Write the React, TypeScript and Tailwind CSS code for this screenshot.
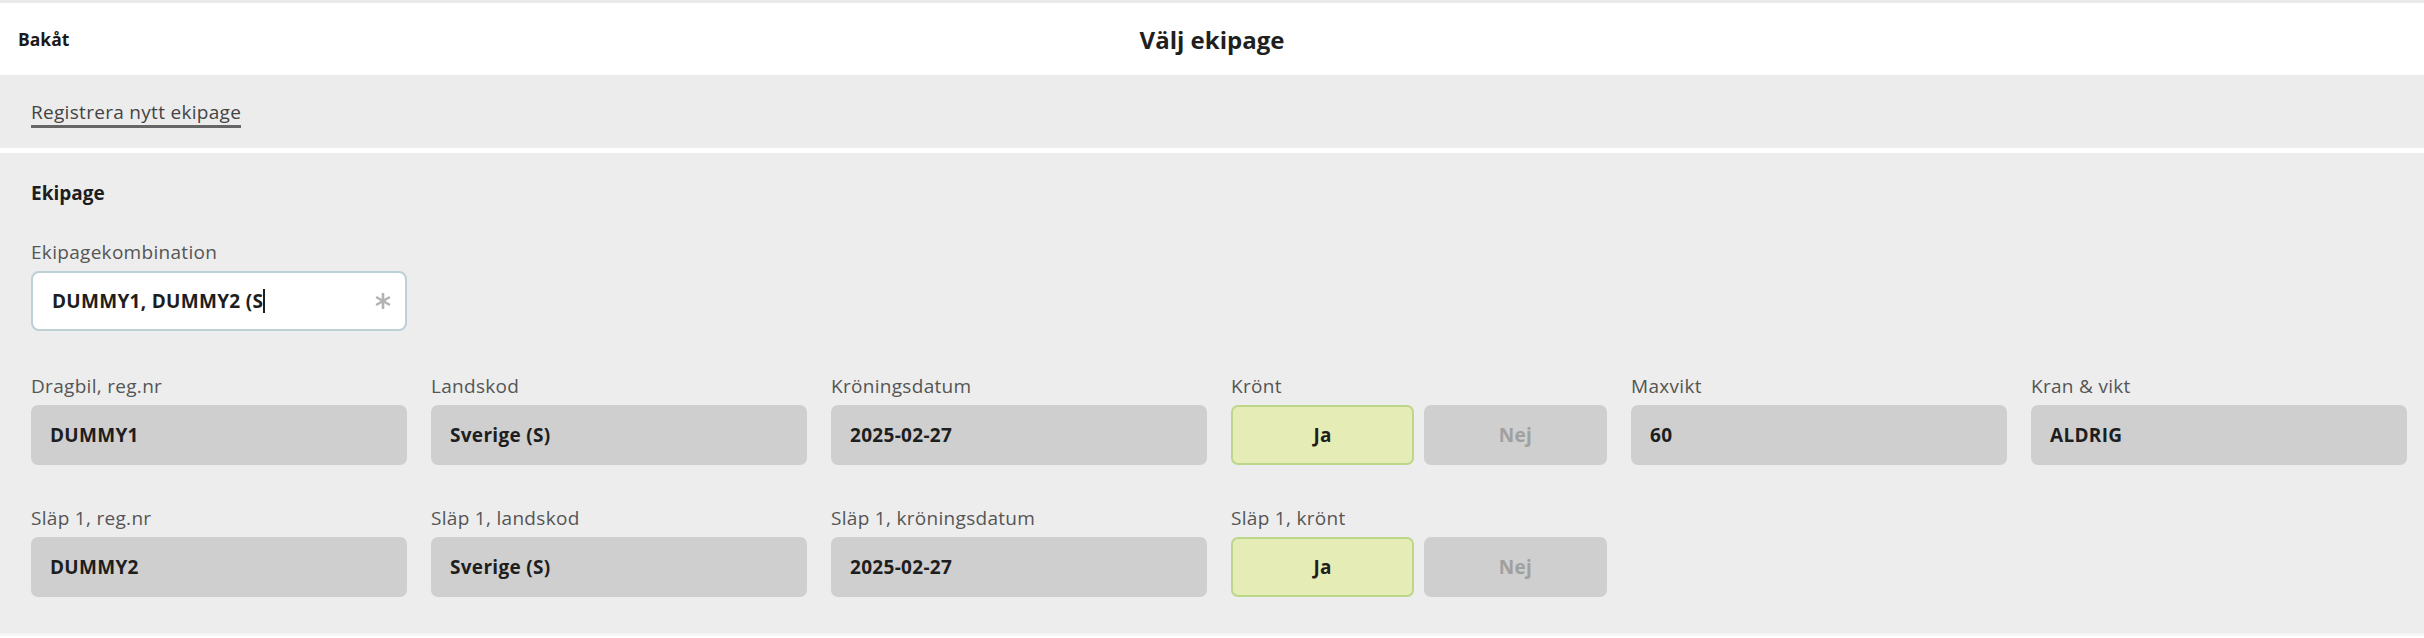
import { ReactNode } from "react";

const font = { fontFamily: '"Open Sans", "Liberation Sans", sans-serif' };

function Label({ children }: { children: ReactNode }) {
  return (
    <div className="text-[19px] tracking-[0.3px] leading-[24px] text-[#555] mb-[7px] whitespace-nowrap">
      {children}
    </div>
  );
}

function ReadOnlyField({ label, value }: { label: string; value: string }) {
  return (
    <div>
      <Label>{label}</Label>
      <div className="h-[60px] rounded-[7px] bg-[#cfcfcf] flex items-center pl-[19px] text-[19px] tracking-[0.3px] font-bold text-[#1e1e1e]">
        {value}
      </div>
    </div>
  );
}

function YesNoField({ label }: { label: string }) {
  return (
    <div>
      <Label>{label}</Label>
      <div className="grid grid-cols-2 gap-[10px]">
        <div className="h-[60px] rounded-[7px] bg-[#e6ecb6] border-2 border-[#bcd68a] flex items-center justify-center text-[19px] font-bold text-[#1e1e1e]">
          Ja
        </div>
        <div className="h-[60px] rounded-[7px] bg-[#cfcfcf] flex items-center justify-center text-[19px] tracking-[0.3px] font-bold text-[#a0a0a0]">
          Nej
        </div>
      </div>
    </div>
  );
}

function Asterisk() {
  return (
    <svg width="18" height="18" viewBox="0 0 18 18" className="text-[#b3b3b3]">
      <g stroke="currentColor" strokeWidth="2.6" strokeLinecap="butt">
        <line x1="9" y1="1" x2="9" y2="17" />
        <line x1="2.1" y1="5" x2="15.9" y2="13" />
        <line x1="2.1" y1="13" x2="15.9" y2="5" />
      </g>
    </svg>
  );
}

export default function App() {
  return (
    <div className="w-[2424px] h-[638px] bg-white overflow-hidden" style={font}>
      <div className="h-[3px] bg-[#e9e9e9]" />
      <header className="h-[72px] grid grid-cols-[1fr_auto_1fr] items-center">
        <div className="pl-[18px] text-[17.5px] font-bold text-[#1a1a1a]">Bakåt</div>
        <h1 className="text-[24px] font-bold text-[#1f1f1f] mt-[2px]">Välj ekipage</h1>
        <div />
      </header>
      <div className="h-[73px] bg-[#ececec] flex items-center px-[31px]">
        <a className="text-[19px] tracking-[0.3px] text-[#444] leading-[24px] border-b-[3px] border-[#666] pb-[1px] mt-[4px] cursor-pointer">
          Registrera nytt ekipage
        </a>
      </div>
      <div className="h-[5px] bg-white" />
      <section className="bg-[#ededed] pl-[31px] pr-[17px] pt-[28px] pb-[36px]">
        <div className="text-[19px] leading-[24px] font-bold text-[#1e1e1e]">Ekipage</div>
        <div className="mt-[35px] w-[376px]">
          <Label>Ekipagekombination</Label>
          <div className="h-[60px] rounded-[8px] bg-white border-2 border-[#bcd0d5] flex items-center pl-[19px] pr-[13px]">
            <span className="text-[19px] tracking-[0.3px] font-bold text-[#1e1e1e]">DUMMY1, DUMMY2 (S</span>
            <span className="w-[1.5px] h-[24px] bg-[#1e1e1e]" />
            <div className="flex-1" />
            <Asterisk />
          </div>
        </div>
        <div className="mt-[43px] grid grid-cols-6 gap-x-[24px] gap-y-[41px]">
          <ReadOnlyField label="Dragbil, reg.nr" value="DUMMY1" />
          <ReadOnlyField label="Landskod" value="Sverige (S)" />
          <ReadOnlyField label="Kröningsdatum" value="2025-02-27" />
          <YesNoField label="Krönt" />
          <ReadOnlyField label="Maxvikt" value="60" />
          <ReadOnlyField label="Kran & vikt" value="ALDRIG" />
          <ReadOnlyField label="Släp 1, reg.nr" value="DUMMY2" />
          <ReadOnlyField label="Släp 1, landskod" value="Sverige (S)" />
          <ReadOnlyField label="Släp 1, kröningsdatum" value="2025-02-27" />
          <YesNoField label="Släp 1, krönt" />
        </div>
      </section>
      <div className="h-[3px] bg-[#f6f6f6]" />
    </div>
  );
}
